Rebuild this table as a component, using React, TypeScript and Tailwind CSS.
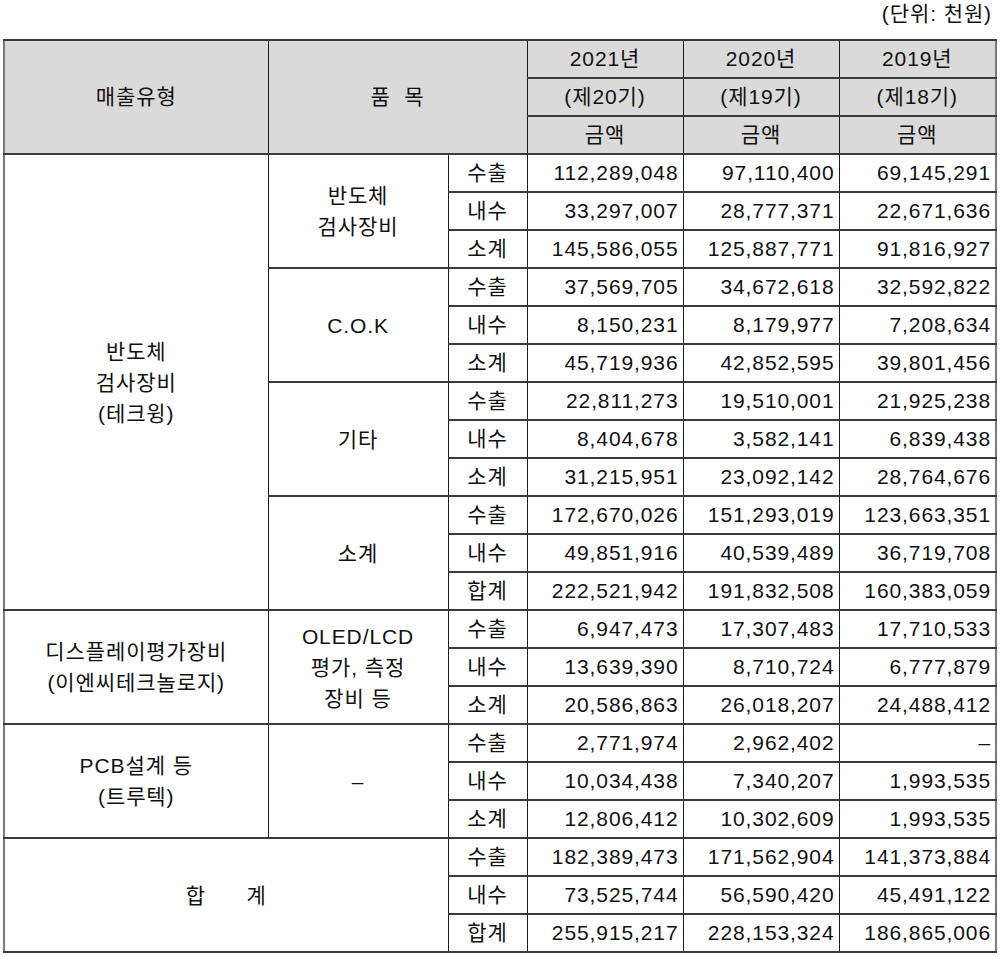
import React from 'react'

type Row = { kind: string; values: [string, string, string] }

interface Group {
  item: string[]
  rows: Row[]
}

interface Section {
  type: string[]
  groups: Group[]
}

const sections: Section[] = [
  {
    type: ['반도체', '검사장비', '(테크윙)'],
    groups: [
      {
        item: ['반도체', '검사장비'],
        rows: [
          { kind: '수출', values: ['112,289,048', '97,110,400', '69,145,291'] },
          { kind: '내수', values: ['33,297,007', '28,777,371', '22,671,636'] },
          { kind: '소계', values: ['145,586,055', '125,887,771', '91,816,927'] },
        ],
      },
      {
        item: ['C.O.K'],
        rows: [
          { kind: '수출', values: ['37,569,705', '34,672,618', '32,592,822'] },
          { kind: '내수', values: ['8,150,231', '8,179,977', '7,208,634'] },
          { kind: '소계', values: ['45,719,936', '42,852,595', '39,801,456'] },
        ],
      },
      {
        item: ['기타'],
        rows: [
          { kind: '수출', values: ['22,811,273', '19,510,001', '21,925,238'] },
          { kind: '내수', values: ['8,404,678', '3,582,141', '6,839,438'] },
          { kind: '소계', values: ['31,215,951', '23,092,142', '28,764,676'] },
        ],
      },
      {
        item: ['소계'],
        rows: [
          { kind: '수출', values: ['172,670,026', '151,293,019', '123,663,351'] },
          { kind: '내수', values: ['49,851,916', '40,539,489', '36,719,708'] },
          { kind: '합계', values: ['222,521,942', '191,832,508', '160,383,059'] },
        ],
      },
    ],
  },
  {
    type: ['디스플레이평가장비', '(이엔씨테크놀로지)'],
    groups: [
      {
        item: ['OLED/LCD', '평가, 측정', '장비 등'],
        rows: [
          { kind: '수출', values: ['6,947,473', '17,307,483', '17,710,533'] },
          { kind: '내수', values: ['13,639,390', '8,710,724', '6,777,879'] },
          { kind: '소계', values: ['20,586,863', '26,018,207', '24,488,412'] },
        ],
      },
    ],
  },
  {
    type: ['PCB설계 등', '(트루텍)'],
    groups: [
      {
        item: ['–'],
        rows: [
          { kind: '수출', values: ['2,771,974', '2,962,402', '–'] },
          { kind: '내수', values: ['10,034,438', '7,340,207', '1,993,535'] },
          { kind: '소계', values: ['12,806,412', '10,302,609', '1,993,535'] },
        ],
      },
    ],
  },
]

const totals: Row[] = [
  { kind: '수출', values: ['182,389,473', '171,562,904', '141,373,884'] },
  { kind: '내수', values: ['73,525,744', '56,590,420', '45,491,122'] },
  { kind: '합계', values: ['255,915,217', '228,153,324', '186,865,006'] },
]

const years = [
  { year: '2021년', term: '(제20기)' },
  { year: '2020년', term: '(제19기)' },
  { year: '2019년', term: '(제18기)' },
]

const cell = 'border-y-2 border-x border-y-[#3a3a3a] border-x-[#1a1a1a] p-0'
const head = `${cell} bg-[#dadada] text-center align-middle font-normal`
const label = `${cell} text-center align-middle leading-[31px]`
const num = `${cell} text-right pr-[4px] align-middle`

function Lines({ lines }: { lines: string[] }) {
  return (
    <>
      {lines.map((l, i) => (
        <div key={i}>{l}</div>
      ))}
    </>
  )
}

function ValueCells({ row }: { row: Row }) {
  return (
    <>
      <td className={`${cell} text-center align-middle`}>{row.kind}</td>
      {row.values.map((v, i) => (
        <td key={i} className={num}>
          {v}
        </td>
      ))}
    </>
  )
}

export default function App() {
  return (
    <div className="w-[1000px] min-h-[957px] bg-white text-[21px] text-[#111] tracking-[0.9px] font-['Liberation_Sans','Noto_Sans_CJK_KR',sans-serif]">
      <div className="h-[39px] flex justify-end pr-[8px] leading-[28px]">(단위: 천원)</div>
      <table className="ml-[3px] w-[992px] table-fixed border-collapse border-2 border-[#7a7a7a]">
        <colgroup>
          <col className="w-[264px]" />
          <col className="w-[180px]" />
          <col className="w-[79px]" />
          <col className="w-[156px]" />
          <col className="w-[156px]" />
          <col className="w-[157px]" />
        </colgroup>
        <thead>
          <tr className="h-[38px]">
            <th rowSpan={3} className={head}>매출유형</th>
            <th rowSpan={3} colSpan={2} className={head}>
              <span className="whitespace-pre">품  목</span>
            </th>
            {years.map((y) => (
              <th key={y.year} className={head}>
                {y.year}
              </th>
            ))}
          </tr>
          <tr className="h-[38px]">
            {years.map((y) => (
              <th key={y.term} className={head}>
                {y.term}
              </th>
            ))}
          </tr>
          <tr className="h-[38px]">
            {years.map((y) => (
              <th key={y.year} className={head}>
                금액
              </th>
            ))}
          </tr>
        </thead>
        <tbody>
          {sections.map((s) => {
            const total = s.groups.reduce((n, g) => n + g.rows.length, 0)
            return s.groups.map((g, gi) =>
              g.rows.map((r, ri) => (
                <tr key={`${s.type[0]}-${gi}-${ri}`} className="h-[38px]">
                  {gi === 0 && ri === 0 && (
                    <td rowSpan={total} className={label}>
                      <Lines lines={s.type} />
                    </td>
                  )}
                  {ri === 0 && (
                    <td rowSpan={g.rows.length} className={label}>
                      <Lines lines={g.item} />
                    </td>
                  )}
                  <ValueCells row={r} />
                </tr>
              ))
            )
          })}
          {totals.map((r, i) => (
            <tr key={`total-${i}`} className="h-[38px]">
              {i === 0 && (
                <td rowSpan={3} colSpan={2} className={label}>
                  <span className="whitespace-pre">합      계</span>
                </td>
              )}
              <ValueCells row={r} />
            </tr>
          ))}
        </tbody>
      </table>
    </div>
  )
}
